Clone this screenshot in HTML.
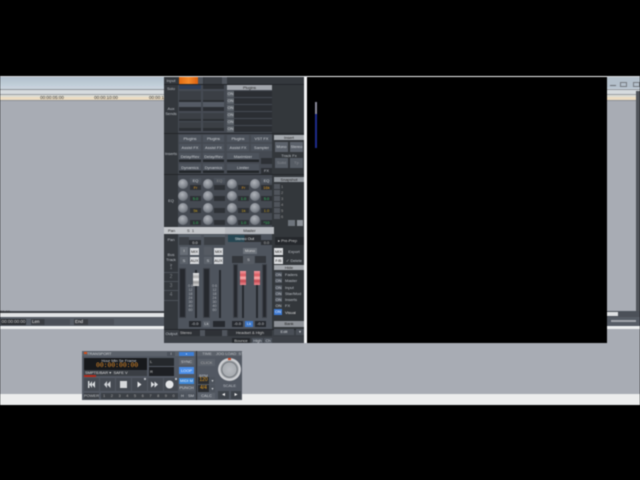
<!DOCTYPE html>
<html><head><meta charset="utf-8">
<style>
html,body{margin:0;padding:0;background:#000;width:640px;height:480px;overflow:hidden}
#r{position:relative;width:640px;height:480px;overflow:hidden;font-family:"Liberation Sans",sans-serif;color:#bcc0c6;filter:blur(.45px)}
#r div{position:absolute;box-sizing:border-box;white-space:nowrap}
#r svg{position:absolute}
.t{font-size:4px;line-height:7px;text-align:center}
.d{background:#2d3035;font-size:4px;line-height:5px;text-align:center}
.b{background:#4d535c;font-size:4px;line-height:7px;text-align:center;color:#d0d3d7}
.l{background:#bfc3c8;color:#222;font-size:4px;line-height:6px;text-align:center}
.k{width:10px;height:10px;border-radius:50%;background:radial-gradient(circle at 42% 35%,#b0b4ba,#7f848c 55%,#484c53)}
.s{background:#26292e;border:1px solid #3e4249}
.n{background:#2b2e33}
</style></head><body><div id="r">

<!-- background app -->
<div style="left:0;top:76px;width:640px;height:329px;background:#a8acb4"></div>
<div style="left:0;top:76px;width:640px;height:1px;background:#d8dadd"></div>
<div style="left:0;top:77px;width:640px;height:12px;background:linear-gradient(#b0bfcc,#cbd6df)"></div>
<div style="left:0;top:89px;width:640px;height:1px;background:#8f9399"></div>
<div style="left:0;top:90px;width:640px;height:4px;background:#d6dbde"></div>
<div style="left:0;top:94px;width:640px;height:1px;background:#9a9ea3"></div>
<div style="left:0;top:95px;width:640px;height:2px;background:#dcdcd4"></div>
<div style="left:0;top:97px;width:640px;height:3px;background:#ecdcc2"></div>
<div style="left:0;top:100px;width:640px;height:1px;background:#8d9197"></div>
<div class="t" style="left:40px;top:94px;width:24px;color:#333;font-size:4.5px">00:00:05:00</div>
<div class="t" style="left:94px;top:94px;width:24px;color:#333;font-size:4.5px">00:00:10:00</div>
<div class="t" style="left:149px;top:94px;width:15px;color:#333;font-size:4.5px;text-align:left">00:00:1</div>

<!-- lower strips -->
<div style="left:0;top:311px;width:607px;height:2px;background:#3d4147"></div>
<div style="left:0;top:313px;width:607px;height:4px;background:#e2e4e6"></div>
<div class="t" style="left:0;top:308px;color:#333">00:00</div>
<div style="left:0;top:317px;width:640px;height:9px;background:#565c65"></div>
<div style="left:1px;top:319px;width:25px;height:6px;background:#2a2d31;color:#ccc;font-size:4.5px;line-height:6px;text-align:center">00:00:00:00</div>
<div style="left:31px;top:319px;width:39px;height:6px;background:linear-gradient(90deg,#3a3d42 35%,#4b5058 35%);color:#e4e4e4;font-size:4.5px;line-height:6px;padding-left:1px">Len</div>
<div style="left:74px;top:319px;width:40px;height:6px;background:linear-gradient(90deg,#3a3d42 35%,#4b5058 35%);color:#e4e4e4;font-size:4.5px;line-height:6px;padding-left:1px">End</div>
<div style="left:0;top:326px;width:640px;height:3px;background:#eceeef"></div>
<div style="left:0;top:394px;width:640px;height:11px;background:#eceded"></div>

<!-- right side window -->
<div style="left:607px;top:77px;width:33px;height:11px;background:#b4c0cb"></div>
<div style="left:620px;top:82px;width:7px;height:5px;border:1px solid #777c82"></div>
<div style="left:633px;top:82px;width:7px;height:5px;border:1px solid #777c82"></div>
<div style="left:610px;top:85px;width:6px;height:1px;background:#6a6f75"></div>
<div style="left:636px;top:91px;width:4px;height:220px;background:#50545a"></div>
<div style="left:607px;top:311px;width:33px;height:6px;background:#4b5058"></div>
<div style="left:607px;top:312px;width:11px;height:4px;background:#dfe1e3"></div>
<div style="left:611px;top:320px;width:25px;height:2px;background:#a2a6ac"></div>

<!-- black video panel -->
<div style="left:304px;top:77px;width:3px;height:266px;background:#f2f3f4"></div>
<div style="left:307px;top:76px;width:300px;height:1px;background:#f2f3f4"></div>
<div style="left:307px;top:77px;width:300px;height:266px;background:#000"></div>
<div style="left:315px;top:102px;width:2px;height:12px;background:#8a8a9a"></div>
<div style="left:315px;top:114px;width:2px;height:34px;background:#1d2b8c"></div>

<!-- mixer -->
<div style="left:164px;top:77px;width:140px;height:266px;background:#454a52"></div>
<div style="left:178px;top:234px;width:94px;height:109px;background:#4e545d"></div>
<div style="left:164px;top:77px;width:14px;height:266px;background:#33373c"></div>
<div style="left:272px;top:77px;width:32px;height:266px;background:#33373b"></div>
<div style="left:164px;top:77px;width:140px;height:7px;background:#34383d"></div>
<div class="t" style="left:165px;top:77px;width:12px">Input</div>
<div style="left:179px;top:77px;width:19px;height:7px;background:linear-gradient(90deg,#e06a12,#f58a2a,#d95f10)"></div>
<div style="left:198px;top:77px;width:5px;height:7px;background:#50555d"></div>
<div style="left:204px;top:77px;width:18px;height:7px;background:#3a3e44"></div>
<div style="left:222px;top:77px;width:5px;height:7px;background:#50555d"></div>
<div style="left:164px;top:84px;width:140px;height:1px;background:#23262a"></div>

<div class="t" style="left:165px;top:85px;width:12px">Solo</div>
<div class="t" style="left:165px;top:106px;width:12px;line-height:5px;white-space:normal">Aux Sends</div>
<div class="d" style="left:179px;top:85px;width:22px;height:4px;background:#2f3e57"></div>
<div class="d" style="left:203px;top:85px;width:21px;height:4px"></div>
<div class="n" style="left:179px;top:91px;width:22px;height:9px;background:#3b3f45"></div>
<div class="n" style="left:203px;top:91px;width:21px;height:9px;background:#3b3f45"></div>
<div class="n" style="left:179px;top:100px;width:22px;height:2px"></div>
<div class="n" style="left:203px;top:100px;width:21px;height:2px"></div>
<div class="n" style="left:179px;top:102px;width:22px;height:5px;background:#555b65"></div>
<div class="n" style="left:203px;top:102px;width:21px;height:5px;background:#555b65"></div>
<div class="n" style="left:179px;top:107px;width:22px;height:4px"></div>
<div class="n" style="left:203px;top:107px;width:21px;height:4px"></div>
<div class="n" style="left:179px;top:113px;width:22px;height:6px;background:#3b3f45"></div>
<div class="n" style="left:203px;top:113px;width:21px;height:6px;background:#3b3f45"></div>
<div class="n" style="left:179px;top:119px;width:22px;height:2px"></div>
<div class="n" style="left:203px;top:119px;width:21px;height:2px"></div>
<div class="n" style="left:179px;top:122px;width:22px;height:6px;background:#3b3f45"></div>
<div class="n" style="left:203px;top:122px;width:21px;height:6px;background:#3b3f45"></div>
<div class="n" style="left:179px;top:128px;width:22px;height:3px"></div>
<div class="n" style="left:203px;top:128px;width:21px;height:3px"></div>

<div class="l" style="left:227px;top:85px;width:45px;height:5px;line-height:5px;background:#a2a6ac">Plugins</div>
<div class="b" style="left:227px;top:91px;width:7px;height:6px;line-height:6px;background:#5c6269">ON</div><div class="n" style="left:234px;top:91px;width:38px;height:6px"></div>
<div class="b" style="left:227px;top:98px;width:7px;height:6px;line-height:6px;background:#5c6269">ON</div><div class="n" style="left:234px;top:98px;width:38px;height:6px"></div>
<div class="b" style="left:227px;top:105px;width:7px;height:6px;line-height:6px;background:#5c6269">ON</div><div class="n" style="left:234px;top:105px;width:38px;height:6px"></div>
<div class="b" style="left:227px;top:112px;width:7px;height:6px;line-height:6px;background:#5c6269">ON</div><div class="n" style="left:234px;top:112px;width:38px;height:6px"></div>
<div class="b" style="left:227px;top:119px;width:7px;height:6px;line-height:6px;background:#5c6269">ON</div><div class="n" style="left:234px;top:119px;width:38px;height:6px"></div>
<div class="b" style="left:227px;top:126px;width:7px;height:6px;line-height:6px;background:#5c6269">ON</div><div class="n" style="left:234px;top:126px;width:38px;height:6px"></div>
<div style="left:164px;top:133px;width:140px;height:1px;background:#23262a"></div>

<div class="t" style="left:165px;top:150px;width:12px">Inserts</div>
<div class="b" style="left:179px;top:135px;width:22px;height:7px">Plugins</div>
<div class="b" style="left:203px;top:135px;width:21px;height:7px">Plugins</div>
<div class="b" style="left:227px;top:135px;width:22px;height:7px">Plugins</div>
<div class="b" style="left:251px;top:135px;width:21px;height:7px">VST FX</div>
<div class="b" style="left:179px;top:144px;width:22px;height:7px">Assist FX</div>
<div class="b" style="left:203px;top:144px;width:21px;height:7px">Assist FX</div>
<div class="b" style="left:227px;top:144px;width:22px;height:7px">Assist FX</div>
<div class="b" style="left:251px;top:144px;width:21px;height:7px">Sampler</div>
<div class="b" style="left:179px;top:153px;width:22px;height:9px;background:linear-gradient(#4d535c 70%,#23262a 70%)">Delay/Rev</div>
<div class="b" style="left:203px;top:153px;width:21px;height:9px;background:linear-gradient(#4d535c 70%,#23262a 70%)">Delay/Rev</div>
<div class="b" style="left:227px;top:153px;width:32px;height:9px;background:linear-gradient(#4d535c 70%,#23262a 70%)">Maximizer</div>
<div class="d" style="left:261px;top:158px;width:11px;height:6px"></div>
<div class="b" style="left:179px;top:164px;width:22px;height:9px;background:linear-gradient(#4d535c 70%,#23262a 70%)">Dynamics</div>
<div class="b" style="left:203px;top:164px;width:21px;height:9px;background:linear-gradient(#4d535c 70%,#23262a 70%)">Dynamics</div>
<div class="b" style="left:227px;top:164px;width:32px;height:9px;background:linear-gradient(#4d535c 70%,#23262a 70%)">Limiter</div>
<div class="d" style="left:261px;top:168px;width:11px;height:6px;line-height:6px">FX</div>

<div class="l" style="left:274px;top:135px;width:30px;height:5px;line-height:5px;background:#a5a9ae">Insert</div>
<div class="b" style="left:275px;top:142px;width:13px;height:10px;line-height:10px;background:#5c626b">Mono</div>
<div class="b" style="left:290px;top:142px;width:13px;height:10px;line-height:10px;background:#5c626b">Stereo</div>
<div class="t" style="left:274px;top:152px;width:30px">Track Fx</div>
<div class="b" style="left:275px;top:158px;width:13px;height:10px;line-height:10px;background:#565c64;color:#888c92">Solid</div>
<div class="b" style="left:290px;top:158px;width:13px;height:10px;line-height:10px;background:#565c64;color:#888c92">Tp</div>
<div style="left:164px;top:174px;width:140px;height:1px;background:#23262a"></div>

<!-- EQ -->
<div class="t" style="left:165px;top:197px;width:12px">EQ</div>
<div class="k" style="left:178px;top:179px"></div><div class="k" style="left:178px;top:191px"></div><div class="k" style="left:178px;top:203px"></div><div class="k" style="left:178px;top:215px"></div>
<div class="k" style="left:203px;top:179px"></div><div class="k" style="left:203px;top:191px"></div><div class="k" style="left:203px;top:203px"></div><div class="k" style="left:203px;top:215px"></div>
<div class="k" style="left:227px;top:179px"></div><div class="k" style="left:227px;top:191px"></div><div class="k" style="left:227px;top:203px"></div><div class="k" style="left:227px;top:215px"></div>
<div class="k" style="left:250px;top:179px"></div><div class="k" style="left:250px;top:191px"></div><div class="k" style="left:250px;top:203px"></div><div class="k" style="left:250px;top:215px"></div>
<div class="b" style="left:190px;top:178px;width:11px;height:5px;line-height:5px">EQ</div>
<div class="b" style="left:214px;top:178px;width:11px;height:5px;line-height:5px;color:#888">EQ</div>
<div class="b" style="left:261px;top:178px;width:11px;height:5px;line-height:5px">EQ</div>
<div class="d" style="left:190px;top:185px;width:11px;height:5px;color:#e09a20">Fr</div>
<div class="d" style="left:190px;top:196px;width:11px;height:5px;color:#35c060">5.0</div>
<div class="d" style="left:190px;top:208px;width:11px;height:5px;color:#c8a020">5k</div>
<div class="d" style="left:190px;top:220px;width:11px;height:5px;color:#35c060">1.0</div>
<div class="d" style="left:214px;top:185px;width:11px;height:5px"></div><div class="d" style="left:214px;top:196px;width:11px;height:5px"></div><div class="d" style="left:214px;top:208px;width:11px;height:5px"></div><div class="d" style="left:214px;top:220px;width:11px;height:5px"></div>
<div class="d" style="left:238px;top:185px;width:11px;height:5px;color:#e09a20">Fr</div>
<div class="d" style="left:238px;top:196px;width:11px;height:5px;color:#35c060">1.0</div>
<div class="d" style="left:238px;top:208px;width:11px;height:5px;color:#c8a020">1k</div>
<div class="d" style="left:238px;top:220px;width:11px;height:5px;color:#35c060">1.0</div>
<div class="d" style="left:261px;top:185px;width:11px;height:5px;color:#e09a20">16k</div>
<div class="d" style="left:261px;top:196px;width:11px;height:5px;color:#35c060">5.0</div>
<div class="d" style="left:261px;top:208px;width:11px;height:5px;color:#c8a020">1.0</div>
<div class="d" style="left:261px;top:220px;width:11px;height:5px;color:#35c060">*10</div>

<div class="l" style="left:274px;top:177px;width:30px;height:5px;line-height:5px;background:#92979d">Snapshot</div>
<div class="d" style="left:274px;top:184px;width:6px;height:5px;background:#50555c"></div><div class="t" style="left:281px;top:183px;color:#999">1</div>
<div class="d" style="left:274px;top:190px;width:6px;height:5px;background:#50555c"></div><div class="t" style="left:281px;top:189px;color:#999">2</div>
<div class="d" style="left:274px;top:196px;width:6px;height:5px;background:#50555c"></div><div class="t" style="left:281px;top:195px;color:#999">3</div>
<div class="d" style="left:274px;top:202px;width:6px;height:5px;background:#50555c"></div><div class="t" style="left:281px;top:201px;color:#999">4</div>
<div class="d" style="left:274px;top:208px;width:6px;height:5px;background:#50555c"></div><div class="t" style="left:281px;top:207px;color:#999">5</div>
<div class="d" style="left:274px;top:214px;width:6px;height:5px;background:#50555c"></div><div class="t" style="left:281px;top:213px;color:#999">6</div>
<div class="b" style="left:288px;top:220px;width:7px;height:6px;background:#6e747c"></div>
<div class="b" style="left:297px;top:220px;width:6px;height:6px;background:#8b9097"></div>

<div style="left:164px;top:227px;width:110px;height:7px;background:#c4c7cb"></div>
<div style="left:178px;top:227px;width:47px;height:7px;color:#333;font-size:4px;line-height:7px;padding-left:9px">S &nbsp;1</div>
<div style="left:165px;top:227px;width:13px;height:7px;color:#222;font-size:4px;line-height:7px;text-align:center">Pan</div>
<div style="left:225px;top:227px;width:49px;height:7px;background:#b6b9be;color:#222;font-size:4px;line-height:7px;text-align:center">Master</div>

<!-- Fader section -->
<div class="t" style="left:165px;top:236px;width:12px">Pan</div>
<div class="d" style="left:179px;top:235px;width:22px;height:2px;background:#596069"></div>
<div class="d" style="left:204px;top:235px;width:21px;height:2px;background:#596069"></div>
<div class="d" style="left:189px;top:240px;width:12px;height:5px;color:#ddd">0.0</div>
<div class="d" style="left:179px;top:237px;width:10px;height:8px;background:#3b3f45"></div>
<div class="d" style="left:204px;top:237px;width:21px;height:8px;background:#3b3f45"></div>
<div style="left:228px;top:235px;width:33px;height:7px;background:linear-gradient(90deg,#264652 50%,#2d3035 50%);color:#e2e2e2;font-size:4px;line-height:7px;text-align:center;overflow:hidden">Stereo Out</div>
<div class="d" style="left:261px;top:240px;width:11px;height:5px;color:#bbb">0.0</div>
<div class="d" style="left:275px;top:237px;width:29px;height:8px;background:#25282c;color:#ccc;line-height:8px;text-align:left;padding-left:3px">&#9656; Pre-Prep</div>

<div class="t" style="left:165px;top:252px;width:12px;line-height:5px;white-space:normal">Bus Track &gt;</div>
<div class="t" style="left:165px;top:265px;width:12px;color:#7c8086;font-size:5px">1</div>
<div class="t" style="left:165px;top:274px;width:12px;color:#7c8086;font-size:5px">2</div>
<div class="t" style="left:165px;top:283px;width:12px;color:#7c8086;font-size:5px">3</div>
<div class="t" style="left:165px;top:292px;width:12px;color:#7c8086;font-size:5px">4</div>
<div style="left:164px;top:272px;width:14px;height:1px;background:#4b5057"></div>
<div style="left:164px;top:281px;width:14px;height:1px;background:#4b5057"></div>
<div style="left:164px;top:290px;width:14px;height:1px;background:#4b5057"></div>
<div style="left:164px;top:300px;width:14px;height:1px;background:#4b5057"></div>

<div class="b" style="left:180px;top:247px;width:8px;height:8px;line-height:8px;background:#686e76;color:#ddd">I</div>
<div class="l" style="left:190px;top:248px;width:9px;height:7px;line-height:7px;background:#d8dadd">MIX</div>
<div class="b" style="left:180px;top:257px;width:8px;height:7px;background:#5c626a">S</div>
<div class="l" style="left:190px;top:257px;width:9px;height:7px;line-height:7px;background:#d8dadd">AUX</div>
<div class="b" style="left:204px;top:247px;width:8px;height:8px;background:#565b63"></div>
<div class="l" style="left:214px;top:248px;width:9px;height:7px;line-height:7px;background:#d8dadd">MIX</div>
<div class="b" style="left:204px;top:257px;width:8px;height:7px;background:#5c626a">S</div>
<div class="l" style="left:214px;top:257px;width:9px;height:7px;line-height:7px;background:#d8dadd">AUX</div>
<div class="l" style="left:243px;top:248px;width:14px;height:6px;background:#6c727a;color:#ddd">Mono</div>
<div class="d" style="left:232px;top:256px;width:11px;height:7px;background:#33363b"></div>
<div class="d" style="left:243px;top:256px;width:11px;height:8px;background:#565b63;color:#ccc;line-height:8px">S</div>
<div class="d" style="left:255px;top:256px;width:11px;height:7px;background:#33363b"></div>

<!-- fader strips -->
<div class="s" style="left:179px;top:268px;width:7px;height:50px"></div>
<div class="s" style="left:203px;top:268px;width:7px;height:50px"></div>
<div class="s" style="left:233px;top:264px;width:5px;height:54px"></div>
<div class="s" style="left:262px;top:264px;width:5px;height:54px"></div>
<div style="left:195px;top:270px;width:2px;height:48px;background:#26292e"></div>
<div style="left:219px;top:270px;width:2px;height:48px;background:#26292e"></div>
<div style="left:242px;top:272px;width:2px;height:46px;background:#26292e"></div>
<div style="left:256px;top:272px;width:2px;height:46px;background:#26292e"></div>
<div class="t" style="left:187px;top:284px;width:7px;height:34px;font-size:3.5px;line-height:4px;white-space:normal;color:#b0b4ba">0 6 12 18 24 30 40 60</div>
<div class="t" style="left:211px;top:284px;width:7px;height:34px;font-size:3.5px;line-height:4px;white-space:normal;color:#b0b4ba">0 6 12 18 24 30 40 60</div>
<div style="left:193px;top:273px;width:6px;height:13px;background:linear-gradient(#e8e9ea,#aaa 30%,#f0f0f0 50%,#9a9a9a 70%,#d8d8d8)"></div>
<div style="left:240px;top:271px;width:6px;height:14px;background:linear-gradient(#f59aa0,#d85a60 30%,#ffb0b0 50%,#c04850 70%,#f08a90)"></div>
<div style="left:254px;top:271px;width:6px;height:14px;background:linear-gradient(#f59aa0,#d85a60 30%,#ffb0b0 50%,#c04850 70%,#f08a90)"></div>

<div class="b" style="left:189px;top:321px;width:12px;height:6px;line-height:6px;background:#26292e">-0.0</div>
<div class="b" style="left:203px;top:321px;width:7px;height:6px;line-height:6px;background:#5c626a">Lk</div>
<div class="d" style="left:213px;top:321px;width:12px;height:6px;background:#26292e"></div>
<div class="b" style="left:232px;top:321px;width:11px;height:6px;line-height:6px;background:#26292e">-0.0</div>
<div class="b" style="left:245px;top:321px;width:8px;height:6px;line-height:6px;background:#3e78c8;color:#dce8f8">Lk</div>
<div class="b" style="left:255px;top:321px;width:11px;height:6px;line-height:6px;background:#26292e">-0.0</div>

<div style="left:164px;top:329px;width:140px;height:1px;background:#23262a"></div>
<div style="left:164px;top:330px;width:140px;height:7px;background:#3a3e44"></div>
<div class="t" style="left:165px;top:330px;width:13px">Output</div>
<div class="d" style="left:179px;top:330px;width:21px;height:6px;background:#2e3136;color:#ccc;line-height:6px;text-align:left;padding-left:1px">Stereo</div>
<div class="d" style="left:200px;top:330px;width:5px;height:6px;background:#50555d"></div>
<div class="d" style="left:205px;top:330px;width:17px;height:6px;background:#2e3136"></div>
<div class="d" style="left:222px;top:330px;width:5px;height:6px;background:#50555d"></div>
<div class="d" style="left:228px;top:330px;width:44px;height:6px;background:#2e3136;color:#ccc;line-height:6px">Headset &amp; High</div>
<div style="left:164px;top:337px;width:140px;height:6px;background:#3c4046"></div>
<div class="d" style="left:232px;top:338px;width:18px;height:5px;background:#25282c;color:#ccc">Bounce</div>
<div class="b" style="left:252px;top:338px;width:11px;height:5px;line-height:5px">High</div>
<div class="b" style="left:264px;top:338px;width:8px;height:5px;line-height:5px">Ch</div>

<!-- right mixer column -->
<div class="l" style="left:274px;top:248px;width:9px;height:7px;line-height:7px;background:#dcdee0">MIX</div>
<div class="t" style="left:284px;top:248px;width:20px">Export</div>
<div class="l" style="left:274px;top:257px;width:9px;height:7px;line-height:7px;background:#dcdee0">F/B</div>
<div class="t" style="left:284px;top:257px;width:20px">&#10003; Delete</div>
<div class="l" style="left:274px;top:265px;width:30px;height:5px;line-height:5px;background:#a4a8ad">Hide</div>
<div class="b" style="left:275px;top:272px;width:7px;height:5px;line-height:5px">ON</div><div class="t" style="left:285px;top:271px">Faders</div>
<div class="b" style="left:275px;top:278px;width:7px;height:5px;line-height:5px">ON</div><div class="t" style="left:285px;top:277px">Master</div>
<div class="b" style="left:275px;top:285px;width:7px;height:5px;line-height:5px">ON</div><div class="t" style="left:285px;top:284px">Input</div>
<div class="b" style="left:275px;top:291px;width:7px;height:5px;line-height:5px">ON</div><div class="t" style="left:285px;top:290px">Star/Mod</div>
<div class="b" style="left:275px;top:297px;width:7px;height:5px;line-height:5px">ON</div><div class="t" style="left:285px;top:296px">Inserts</div>
<div class="b" style="left:275px;top:303px;width:7px;height:5px;line-height:5px;background:#3a3e43">ON</div><div class="t" style="left:285px;top:302px">FX</div>
<div class="b" style="left:274px;top:309px;width:8px;height:6px;line-height:6px;background:#3c78d0;color:#e8f0ff">ON</div><div class="t" style="left:285px;top:309px;color:#ddd">Visual</div>
<div class="l" style="left:274px;top:321px;width:30px;height:6px;background:#8d9197">Bank</div>
<div class="b" style="left:274px;top:329px;width:20px;height:6px;line-height:6px;background:#4a4f57">Edit</div>
<div class="b" style="left:296px;top:329px;width:8px;height:6px;line-height:6px;background:#4a4f57">&#9662;</div>

<!-- transport -->
<div style="left:82px;top:351px;width:160px;height:49px;background:#525862"></div>
<div style="left:82px;top:351px;width:160px;height:5px;background:#5c626b"></div>
<div style="left:84px;top:352px;width:3px;height:2px;background:#d2501c"></div>
<div style="left:87px;top:351px;color:#cfd2d6;font-size:4px;line-height:5px">TRANSPORT</div>
<div class="b" style="left:167px;top:352px;width:8px;height:4px;line-height:4px">I</div>
<div class="b" style="left:179px;top:352px;width:15px;height:4px;line-height:4px;background:#3e7fd6;color:#e2eeff">&#8226;</div>
<div style="left:196px;top:351px;width:1px;height:49px;background:#2c2f34"></div>
<div class="t" style="left:199px;top:351px;width:16px;line-height:5px">TIME</div>
<div class="t" style="left:216px;top:351px;width:26px;line-height:5px">JOG LOAD &nbsp;ST</div>

<div style="left:84px;top:358px;width:63px;height:12px;background:#17191c"></div>
<div style="left:97px;top:358px;width:44px;color:#cfd2d6;font-size:4px;line-height:5px;text-align:center">Hour Min Se Frame</div>
<div style="left:96px;top:362px;width:44px;color:#e8902a;font-size:6.4px;line-height:7px;font-family:'Liberation Mono',monospace">00:00:00:00</div>
<div style="left:84px;top:370px;width:63px;height:6px;background:#3a3e44;color:#ddd;font-size:4px;line-height:6px;padding-left:1px">SMPTE/BAR &#9662; &nbsp;SAFE V</div>
<div style="left:84px;top:375px;width:12px;height:2px;background:#b02a1c"></div>
<div style="left:149px;top:358px;width:25px;height:8px;background:#25282c;color:#ccc;font-size:4px;line-height:8px;padding-left:1px">L</div>
<div style="left:149px;top:367px;width:25px;height:9px;background:#1d1f23;color:#ccc;font-size:4px;line-height:9px;padding-left:1px">R</div>
<div class="b" style="left:179px;top:358px;width:15px;height:7px;background:#5c626b">SYNC</div>
<div class="b" style="left:179px;top:367px;width:15px;height:7px;background:#4a8ee8;color:#eaf3ff">LOOP</div>
<div class="b" style="left:179px;top:378px;width:15px;height:6px;line-height:6px;background:#3d88d8;color:#eaf3ff">MIDI M</div>
<div class="b" style="left:179px;top:385px;width:15px;height:6px;line-height:6px;background:#5c626b">PUNCH</div>

<div style="left:84px;top:378px;width:15px;height:13px;background:#454a52"></div>
<div style="left:100px;top:378px;width:15px;height:13px;background:#454a52"></div>
<div style="left:116px;top:378px;width:15px;height:13px;background:#454a52"></div>
<div style="left:132px;top:378px;width:15px;height:13px;background:#454a52"></div>
<div style="left:148px;top:378px;width:15px;height:13px;background:#454a52"></div>
<div style="left:164px;top:378px;width:14px;height:13px;background:#454a52"></div>
<svg style="left:82px;top:378px" width="100" height="13" viewBox="0 0 100 13">
<path fill="#dcdfe2" d="M6 3h1.4v7H6zM13 3v7L10 6.500zM10 3v7L7.400 6.500z"/>
<path fill="#d0d3d7" d="M25 3v7l-3-3.500zM28.500 3v7l-3.500-3.500z"/>
<rect x="38" y="3" width="7" height="7" fill="#d6d8db"/>
<path fill="#e4e6e8" d="M55.500 3.500l4 3-4 3z"/>
<path fill="#dcdfe2" d="M69 3.500l3.500 3-3.500 3zM72.500 3.500l3.500 3-3.500 3z"/>
<circle cx="87.500" cy="6.500" r="4" fill="#e4e6e8"/>
</svg>
<div style="left:144px;top:378px;width:2px;height:2px;background:#b8bcc1"></div>
<div style="left:175px;top:378px;width:2px;height:2px;background:#b8bcc1"></div>

<div style="left:84px;top:393px;width:15px;height:6px;background:#3c4046;color:#c0c3c7;font-size:4px;line-height:6px;text-align:center">POWER</div>
<div style="left:101px;top:393px;width:77px;height:6px;background:#3c4046;color:#aaa;font-size:4px;line-height:6px;letter-spacing:5.500px;padding-left:2px">1234567890</div>
<div class="b" style="left:179px;top:393px;width:7px;height:6px;line-height:6px">H</div>
<div class="b" style="left:187px;top:393px;width:8px;height:6px;line-height:6px">SM</div>

<div class="b" style="left:198px;top:359px;width:17px;height:7px;background:#5c626b;color:#aaa">CLICK</div>
<div class="t" style="left:198px;top:372px;width:11px">BPM</div>
<div style="left:198px;top:377px;width:11px;height:7px;background:#2a2c30;color:#e09a20;font-size:5px;line-height:7px;text-align:center">120</div>
<div class="b" style="left:210px;top:377px;width:5px;height:7px">&#9662;</div>
<div style="left:198px;top:385px;width:11px;height:7px;background:#2a2c30;color:#e09a20;font-size:5px;line-height:7px;text-align:center">4/4</div>
<div class="b" style="left:210px;top:385px;width:5px;height:7px">&#9662;</div>
<div class="b" style="left:198px;top:393px;width:17px;height:6px;line-height:6px;background:#5c626b">CALC</div>

<div style="left:218px;top:358px;width:23px;height:23px;border-radius:50%;background:radial-gradient(circle at 50% 50%,#b8bbc0 0,#a8acb1 42%,#6d7278 46%,#d4d6d9 60%,#84888e 100%)"></div>
<div style="left:228px;top:358px;width:3px;height:2px;background:#d04a2a"></div>
<div class="t" style="left:218px;top:382px;width:23px">SCALE</div>
<div class="b" style="left:218px;top:391px;width:11px;height:8px;line-height:8px;background:#3e434a;color:#f0f0f0;font-size:6px">&#9666;</div>
<div class="b" style="left:231px;top:391px;width:10px;height:8px;line-height:8px;background:#3e434a;color:#f0f0f0;font-size:6px">&#9656;</div>

</div></body></html>
